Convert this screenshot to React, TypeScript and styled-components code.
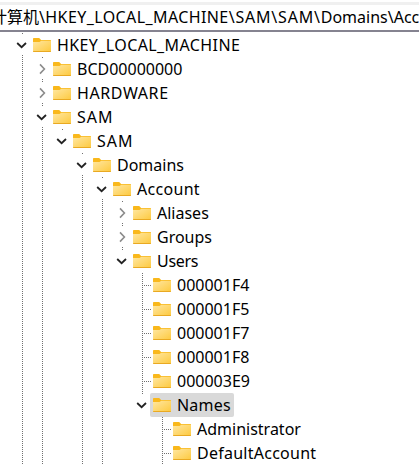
import React from 'react';
import styled, { createGlobalStyle } from 'styled-components';

const GlobalStyle = createGlobalStyle`
  html, body { margin: 0; background: #fff; overflow: hidden; }
  body { font: 16px/24px "Noto Sans", "Noto Sans CJK SC", sans-serif; color: #000; }
`;

const DOT = '#707070';

const Window = styled.main`
  display: flex;
  flex-direction: column;
  box-sizing: border-box;
  width: 419px;
  height: 465px;
  padding-top: 2px;
  overflow: hidden;
  background: #fff;
`;

const AddressBar = styled.header`
  display: flex;
  box-sizing: border-box;
  flex: none;
  height: 30px;
  border-top: 3px solid #f0f0f0;
  border-bottom: 2px solid #858390;
  margin-bottom: 1px;
  white-space: pre;
  overflow: hidden;
  line-height: 25px;
`;

const Crumb = styled.span<{ $gap?: number; $shift?: number }>`
  flex: none;
  letter-spacing: ${p => p.$gap ?? 0}px;
  margin-left: ${p => p.$shift ?? 0}px;
`;

const Tree = styled.div`
  display: flex;
  flex-direction: column;
  padding-left: 12px;
`;

const Row = styled.div`
  display: flex;
  flex: none;
  height: 24px;
`;

const dotted = `repeating-linear-gradient(to bottom, ${DOT} 0 1px, transparent 1px 2px)`;

const Guide = styled.div<{ $on: boolean }>`
  flex: none;
  width: 20px;
  background: ${p => (p.$on ? dotted : 'none')} 10px 0 / 1px 100% no-repeat;
`;

const Expander = styled.div<{ $top: boolean; $bottom: boolean }>`
  display: flex;
  flex: none;
  flex-direction: column;
  justify-content: space-between;
  width: 18px;
  &::before, &::after { content: ''; width: 1px; margin-left: 10px; }
  &::before { height: 1px; background: ${p => (p.$top ? DOT : 'none')}; }
  &::after { height: 2px; background: ${p => (p.$bottom ? dotted : 'none')}; }
`;

const Branch = styled.div`
  flex: none;
  width: 19px;
  margin-right: -1px;
  background:
    ${dotted} 10px 0 / 1px 100% no-repeat,
    repeating-linear-gradient(to right, ${DOT} 0 1px, transparent 1px 2px) 12px 12px / 7px 1px no-repeat;
`;

const Item = styled.div<{ $selected: boolean; $gap: number }>`
  display: flex;
  align-items: center;
  gap: 6px;
  box-sizing: border-box;
  padding-left: 3px;
  ${p => p.$selected && 'width: 84px;'}
  border-radius: 2px;
  background: ${p => (p.$selected ? '#d9d9d9' : 'transparent')};
  letter-spacing: ${p => p.$gap}px;
  white-space: nowrap;
`;

const Glyph = styled.svg`
  display: block;
  flex: none;
`;

const ChevronGlyph = styled(Glyph)`
  margin-left: 4px;
`;

const Chevron = ({ open }: { open: boolean }) => (
  <ChevronGlyph width="12" height="12" viewBox="0 0 12 12" fill="none">
    {open
      ? <path d="M1.2 4 5.6 8.2 10 4" stroke="#222" strokeWidth="1.8" />
      : <path d="M4 1.4 8.4 6 4 10.6" stroke="#8c8c8c" strokeWidth="1.6" />}
  </ChevronGlyph>
);

const Folder = () => (
  <Glyph width="18" height="14" viewBox="0 0 18 14">
    <defs>
      <linearGradient id="face" x1="0" y1="0" x2="1" y2="1">
        <stop offset="0" stopColor="#ffe7a2" />
        <stop offset="1" stopColor="#fdc93e" />
      </linearGradient>
    </defs>
    <path d="M0 .8Q0 0 .8 0h5.4l1.9 2H17.4q.6 0 .6.6V6H0z" fill="#f9b81c" />
    <path d="M0 4h6.5l1.8-1.2H18v10.4q0 .8-.8.8H.8q-.8 0-.8-.8z" fill="url(#face)" />
    <path d="M0 13h18q0 1-.8 1H.8q-.8 0-.8-1z" fill="#e9a922" />
  </Glyph>
);

type Node = {
  name: string;
  gap?: number;
  open?: boolean;
  leaf?: boolean;
  /* whether a sibling follows at each level, from the root down to this node */
  lines: string;
  selected?: boolean;
};

const nodes: Node[] = [
  { name: 'HKEY_LOCAL_MACHINE', gap: 0.4, open: true, lines: '1' },
  { name: 'BCD00000000', lines: '11' },
  { name: 'HARDWARE', gap: 0.6, lines: '11' },
  { name: 'SAM', gap: 1, open: true, lines: '11' },
  { name: 'SAM', gap: 1, open: true, lines: '110' },
  { name: 'Domains', open: true, lines: '1101' },
  { name: 'Account', gap: 0.3, open: true, lines: '11011' },
  { name: 'Aliases', lines: '110111' },
  { name: 'Groups', lines: '110111' },
  { name: 'Users', lines: '110110', gap: -0.3, open: true },
  { name: '000001F4', leaf: true, lines: '1101101' },
  { name: '000001F5', leaf: true, lines: '1101101' },
  { name: '000001F7', leaf: true, lines: '1101101' },
  { name: '000001F8', leaf: true, lines: '1101101' },
  { name: '000003E9', leaf: true, lines: '1101101' },
  { name: 'Names', gap: 0.2, open: true, selected: true, lines: '1101100' },
  { name: 'Administrator', leaf: true, lines: '11011001' },
  { name: 'DefaultAccount', gap: 0.25, leaf: true, lines: '11011001' },
];

const TreeRow = ({ node }: { node: Node }) => {
  const levels = [...node.lines].map(c => c === '1');
  const own = levels.pop() ?? false;
  return (
    <Row>
      {levels.map((on, i) => <Guide key={i} $on={on} />)}
      {node.leaf
        ? <Branch />
        : <Expander $top $bottom={own}><Chevron open={!!node.open} /></Expander>}
      <Item $selected={!!node.selected} $gap={node.gap ?? 0}>
        <Folder />
        <span>{node.name}</span>
      </Item>
    </Row>
  );
};

export default function App() {
  return (
    <>
      <GlobalStyle />
      <Window>
        <AddressBar>
          <Crumb $shift={-9}>计算机</Crumb>
          <Crumb $gap={0.4}>\HKEY_LOCAL_MACHINE</Crumb>
          <Crumb $gap={0.8}>\SAM\SAM\</Crumb>
          <Crumb>Domains\Account</Crumb>
        </AddressBar>
        <Tree>{nodes.map((n, i) => <TreeRow key={i} node={n} />)}</Tree>
      </Window>
    </>
  );
}
